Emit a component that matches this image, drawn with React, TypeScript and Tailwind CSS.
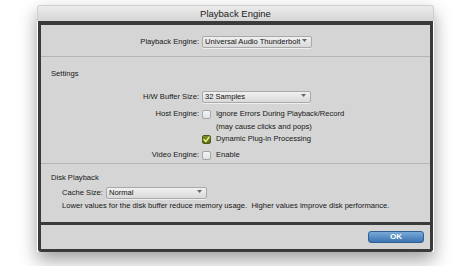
import React from "react";

const font = { fontFamily: '"Liberation Sans", Arial, sans-serif' };

function Dropdown({ value, width }: { value: string; width: string }) {
  return (
    <div
      className={`relative flex h-[12px] items-center rounded-[2px] border border-[#a9a9a9] bg-gradient-to-b from-[#f0f0f0] to-[#dadada] pl-[2px] leading-none text-[#111] shadow-[0_1px_0_rgba(255,255,255,0.6)] ${width}`}
    >
      {value}
      <svg
        className="absolute right-[4px] top-[2px]"
        width="5"
        height="4"
        viewBox="0 0 5 4"
      >
        <path d="M0 0 L5 0 L2.5 3 Z" fill="#666" />
      </svg>
    </div>
  );
}

function Checkbox({ checked = false }: { checked?: boolean }) {
  if (checked) {
    return (
      <div className="flex h-[9px] w-[9px] items-center justify-center rounded-[2px] border border-[#4d5a18] bg-gradient-to-b from-[#7d8d2c] to-[#5c6b1c]">
        <svg width="7" height="7" viewBox="0 0 7 7">
          <path
            d="M1 3.6 L2.8 5.6 L6 1.2"
            fill="none"
            stroke="#e4ee70"
            strokeWidth="1.5"
            strokeLinecap="round"
            strokeLinejoin="round"
          />
        </svg>
      </div>
    );
  }
  return (
    <div className="h-[9px] w-[9px] rounded-[2px] border border-[#a6a6a6] bg-gradient-to-b from-[#f4f4f4] to-[#e2e2e2]" />
  );
}

function Row({
  label,
  children,
  className = "",
}: {
  label?: string;
  children: React.ReactNode;
  className?: string;
}) {
  return (
    <div className={`flex h-[12px] items-center ${className}`}>
      <div className="w-[161px] pr-[3px] text-right">{label}</div>
      <div className="flex items-center">{children}</div>
    </div>
  );
}

export default function App() {
  return (
    <div
      className="h-[266px] w-[474px] overflow-hidden bg-white pl-[37px] pt-[5px] text-[7.6px] leading-none text-[#161616]"
      style={font}
    >
      <div className="w-[397px] rounded-t-[3px] shadow-[0_8px_18px_rgba(0,0,0,0.38)]">
        {/* Title bar */}
        <div className="flex h-[16px] items-center justify-center rounded-t-[3px] border-x border-t border-[#cfcfcf] bg-gradient-to-b from-[#ebebeb] to-[#d6d6d6] pt-[1px] text-[9.5px] text-[#222]">
          Playback Engine
        </div>

        {/* Frame */}
        <div className="mx-[1px] flex flex-col gap-[3px] rounded-b-[3px] border-x-[3px] border-b-[3px] border-t-[4px] border-[#3a3a3a] bg-[#3a3a3a]">
          <div className="flex h-[197px] flex-col bg-[#d5d5d5]">
            {/* Engine */}
            <div className="h-[32px] border-b border-[#b5b5b5] pt-[11px]">
              <Row label="Playback Engine:">
                <Dropdown
                  value="Universal Audio Thunderbolt"
                  width="w-[110px]"
                />
              </Row>
            </div>

            {/* Settings */}
            <div className="h-[107px] border-b border-[#b5b5b5] pt-[11px]">
              <div className="flex h-[12px] items-center pl-[10px]">
                Settings
              </div>
              <Row label="H/W Buffer Size:" className="mt-[11px]">
                <Dropdown value="32 Samples" width="w-[109px]" />
              </Row>
              <Row label="Host Engine:" className="mt-[5px]">
                <Checkbox />
                <span className="ml-[5px]">
                  Ignore Errors During Playback/Record
                </span>
              </Row>
              <Row className="mt-[1px]">
                <span className="ml-[14px]">(may cause clicks and pops)</span>
              </Row>
              <Row>
                <Checkbox checked />
                <span className="ml-[5px]">Dynamic Plug-in Processing</span>
              </Row>
              <Row label="Video Engine:" className="mt-[4px]">
                <Checkbox />
                <span className="ml-[5px]">Enable</span>
              </Row>
            </div>

            {/* Disk Playback */}
            <div className="pl-[10px] pt-[8px]">
              <div className="flex h-[12px] items-center">Disk Playback</div>
              <div className="mt-[3px] flex h-[12px] items-center pl-[11px]">
                <span className="mr-[3px]">Cache Size:</span>
                <Dropdown value="Normal" width="w-[101px]" />
              </div>
              <div className="mt-[1px] flex h-[12px] items-center whitespace-pre pl-[11px]">
                Lower values for the disk buffer reduce memory usage.  Higher
                values improve disk performance.
              </div>
            </div>
          </div>

          {/* Buttons */}
          <div className="flex h-[24px] items-center justify-end bg-[#d5d5d5] pr-[6px]">
            <button className="flex h-[12px] w-[56px] items-center justify-center rounded-[3px] border border-[#2f5f93] bg-gradient-to-b from-[#79aad8] to-[#3c74b1] text-[8px] font-bold text-white">
              OK
            </button>
          </div>
        </div>
      </div>
    </div>
  );
}
